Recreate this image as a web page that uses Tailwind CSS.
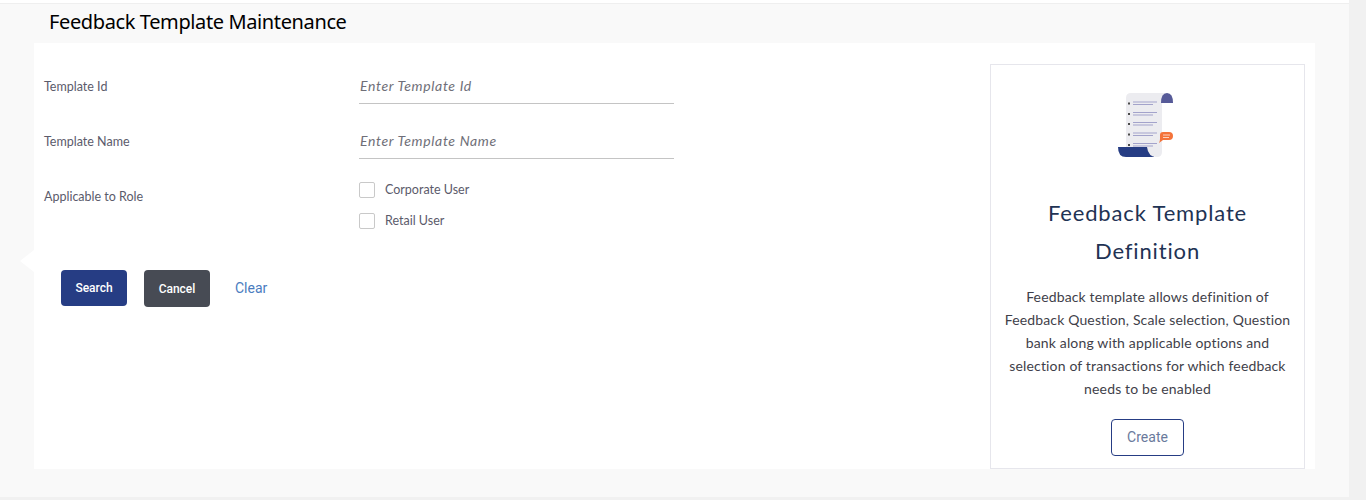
<!DOCTYPE html>
<html><head><meta charset="utf-8"><script src="https://cdn.jsdelivr.net/npm/@tailwindcss/browser@4"></script></head>
<body class="overflow-hidden bg-[#f1f1f1]">
<div class="flex h-[500px] w-[1366px]">
  <div class="flex h-full w-[1349px] flex-col bg-[#f9f9f9]">
    <div class="h-[4px] border-b border-[#efefef] bg-white"></div>
    <h1 class="h-[39px] pl-[49px] font-['Noto_Sans',sans-serif] text-[20px] leading-[36px] tracking-[-0.38px] text-black">Feedback Template Maintenance</h1>
    <main class="relative ml-[34px] flex h-[426px] w-[1281px] bg-white font-['Lato',sans-serif] text-[#5b5b6b]">
      <div class="absolute top-[207px] -left-[14px] h-0 w-0 border-y-[11px] border-r-[14px] border-y-transparent border-r-white"></div>
      <section class="flex-1">
        <div class="grid grid-cols-[315px_315px] pl-[10px] pt-[17px]">
          <label class="pt-[19px] text-[12.5px] leading-[16px]">Template Id</label>
          <div class="flex h-[44px] items-center border-b border-[#c4c4c4] pt-[8px] pl-[1px] text-[14px] tracking-[0.65px] italic text-[#6f6f78]">Enter Template Id</div>
          <label class="pt-[30px] text-[12.5px] leading-[16px]">Template Name</label>
          <div class="mt-[11px] flex h-[44px] items-center border-b border-[#c4c4c4] pt-[8px] pl-[1px] text-[14px] tracking-[0.65px] italic text-[#6f6f78]">Enter Template Name</div>
          <label class="pt-[30px] text-[12.5px] leading-[16px]">Applicable to Role</label>
          <div class="flex flex-col gap-[15px] pt-[23px] text-[12.5px] leading-[16px]">
            <div class="flex items-center gap-[10px]"><span class="size-[16px] rounded-[2px] border border-[#c9c9c9]"></span>Corporate User</div>
            <div class="flex items-center gap-[10px]"><span class="size-[16px] rounded-[2px] border border-[#c9c9c9]"></span>Retail User</div>
          </div>
        </div>
        <div class="mt-[41px] flex items-start pl-[27px] font-['Roboto',sans-serif]">
          <button class="h-[36px] w-[66px] rounded-[4px] bg-[#263d84] text-[12px] font-medium text-white">Search</button>
          <button class="ml-[17px] h-[37px] w-[66px] rounded-[4px] bg-[#474b54] pt-[1px] text-[12px] font-medium text-white">Cancel</button>
          <a class="ml-[25px] pt-[8px] text-[14px] leading-[20px] text-[#4a7cc0]">Clear</a>
        </div>
      </section>
      <aside class="mr-[10px] mt-[21px] flex h-[405px] w-[315px] flex-col items-center border border-[#e6e6ec] bg-white text-center">
        <svg class="mt-[28px] mr-[3px] shrink-0" width="56" height="65" viewBox="0 0 56 65">
          <path d="M0 54 H36 V64 H8 Q0 64 0 54Z" fill="#263d84"/>
          <path d="M13 0 H50 V10 H44 V59 Q44 64 39 64 Q30 64 29 54 H8 V5 Q8 0 13 0Z" fill="#ececf0"/>
          <path d="M43 10 Q43 0 49 0 Q55 0 55 10Z" fill="#565a98"/>
          <g fill="#4a4a4a"><rect x="10" y="9.5" width="2" height="2"/><rect x="10" y="20" width="2" height="2"/><rect x="10" y="30" width="2" height="2"/><rect x="10" y="40.5" width="2" height="2"/><rect x="10" y="51" width="2" height="2"/></g>
          <g fill="#a3a3cb"><rect x="15" y="8.5" width="24" height="1"/><rect x="15" y="11" width="20" height="1"/><rect x="15" y="19" width="24" height="1"/><rect x="15" y="21.5" width="20" height="1"/><rect x="15" y="29" width="24" height="1"/><rect x="15" y="31.5" width="20" height="1"/><rect x="15" y="39.5" width="24" height="1"/><rect x="15" y="42" width="20" height="1"/><rect x="15" y="50" width="24" height="1"/><rect x="15" y="52.5" width="20" height="1"/></g>
          <path d="M42 42 Q42 39 45 39 H51 Q55 39 55 43 Q55 47 51 47 H45 L41 50 Q42 48 42 46Z" fill="#f4733a"/>
          <path d="M45 42 H52 M45 44.5 H51" stroke="#fbd3bf" stroke-width="1"/>
        </svg>
        <h2 class="mt-[36px] w-[240px] text-[22px] leading-[38px] font-normal tracking-[0.85px] text-[#1f3354]">Feedback Template Definition</h2>
        <p class="mt-[15px] w-[290px] text-[14px] leading-[23px] tracking-[0.15px] text-[#3f3f4a]">Feedback template allows definition of Feedback Question, Scale selection, Question bank along with applicable options and selection of transactions for which feedback needs to be enabled</p>
        <button class="mt-[19px] h-[37px] w-[73px] rounded-[4px] border border-[#263d84] font-['Roboto',sans-serif] text-[14px] text-[#6a7a9c]">Create</button>
      </aside>
    </main>
    <div class="mt-[28px] h-[3px] bg-[#f1f1f1]"></div>
  </div>
</div>
</body></html>
